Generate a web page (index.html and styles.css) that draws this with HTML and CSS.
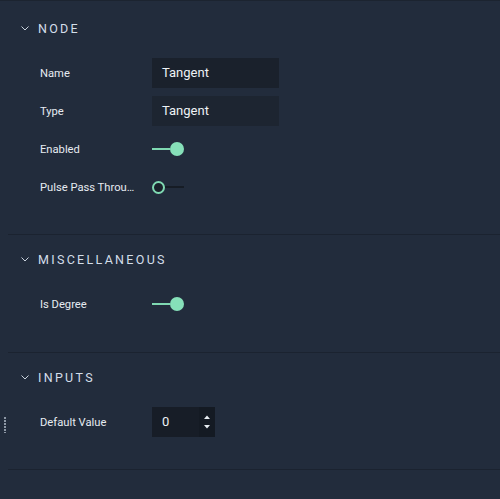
FILE: index.html
```html
<!DOCTYPE html>
<html>
<head>
<meta charset="utf-8">
<link rel="stylesheet" href="styles.css">
</head>
<body>
<div class="panel">
  <section class="section first">
    <div class="header">
      <svg class="chev" width="8" height="5" viewBox="0 0 8 5"><path d="M0.5 0.5 L4 4 L7.5 0.5" fill="none" stroke="#c9d2dd" stroke-width="1"/></svg>
      <span class="title">NODE</span>
    </div>
    <div class="rows">
      <div class="row"><span class="label">Name</span><div class="text-input">Tangent</div></div>
      <div class="row"><span class="label">Type</span><div class="text-input ro">Tangent</div></div>
      <div class="row"><span class="label">Enabled</span><div class="toggle on"><span class="track"></span><span class="knob"></span></div></div>
      <div class="row"><span class="label" title="Pulse Pass Through">Pulse Pass Throu…</span><div class="toggle off"><span class="knob"></span><span class="track"></span></div></div>
    </div>
  </section>
  <section class="section mid">
    <div class="header">
      <svg class="chev" width="8" height="5" viewBox="0 0 8 5"><path d="M0.5 0.5 L4 4 L7.5 0.5" fill="none" stroke="#c9d2dd" stroke-width="1"/></svg>
      <span class="title">MISCELLANEOUS</span>
    </div>
    <div class="rows">
      <div class="row"><span class="label">Is Degree</span><div class="toggle on"><span class="track"></span><span class="knob"></span></div></div>
    </div>
  </section>
  <section class="section">
    <div class="header">
      <svg class="chev" width="8" height="5" viewBox="0 0 8 5"><path d="M0.5 0.5 L4 4 L7.5 0.5" fill="none" stroke="#c9d2dd" stroke-width="1"/></svg>
      <span class="title">INPUTS</span>
    </div>
    <div class="rows">
      <div class="row port">
        <span class="handle"></span>
        <span class="label">Default Value</span>
        <div class="num-input">
          <span class="num-value">0</span>
          <span class="spin">
            <svg width="8" height="4" viewBox="0 0 8 4"><path d="M1 4 L4 0.5 L7 4 Z" fill="#e8edf2"/></svg>
            <svg width="8" height="4" viewBox="0 0 8 4"><path d="M1 0 L4 3.5 L7 0 Z" fill="#e8edf2"/></svg>
          </span>
        </div>
      </div>
    </div>
  </section>
</div>
</body>
</html>
```

FILE: styles.css
```css
html, body {
  margin: 0;
  padding: 0;
  background: #222c3c;
  width: 500px;
  height: 499px;
  overflow: hidden;
}
.panel {
  border-top: 1px solid #1c2430;
  font-family: Roboto, "Noto Sans", sans-serif;
  color: #e4e9ef;
}
.section {
  margin-left: 8px;
  padding: 12px 0 32px 0;
  border-bottom: 1px solid #1b2330;
}
.section.first {
  padding-top: 15px;
  padding-bottom: 32px;
}
.section.mid {
  padding-bottom: 33px;
}
.header {
  height: 24px;
  display: flex;
  align-items: center;
  padding-left: 13px;
}
.chev {
  display: block;
  margin-right: 9px;
}
.title {
  font-size: 12.5px;
  letter-spacing: 2.3px;
  color: #d3deea;
  font-weight: 400;
}
.rows {
  display: flex;
  flex-direction: column;
  gap: 8px;
  margin-top: 18px;
}
.row {
  position: relative;
  height: 30px;
  display: flex;
  align-items: center;
  padding-left: 32px;
}
.label {
  width: 112px;
  font-size: 11.2px;
  color: #e6ebf1;
  white-space: nowrap;
}
.text-input {
  width: 117px;
  height: 30px;
  padding-left: 10px;
  background: #1a212c;
  font-size: 13px;
  line-height: 30px;
  color: #eef2f6;
}
.text-input.ro {
  background: #1d2531;
}
.toggle {
  width: 32px;
  height: 14px;
  display: flex;
  align-items: center;
}
.toggle .track {
  height: 2px;
  flex: 1;
}
.toggle .knob {
  width: 14px;
  height: 14px;
  border-radius: 50%;
  box-sizing: border-box;
}
.toggle.on .track {
  background: #7fd9b2;
}
.toggle.on .knob {
  background: #86e0b9;
}
.toggle.off .track {
  background: #161c25;
}
.toggle.off .knob {
  width: 13px;
  height: 13px;
  border: 2px solid #7fd9b2;
  background: #1a212b;
}
.handle {
  position: absolute;
  left: -4px;
  top: 10px;
  width: 2px;
  height: 16px;
  background: repeating-linear-gradient(to bottom, #8e98a6 0 2px, transparent 2px 3px);
}
.num-input {
  width: 63px;
  height: 30px;
  display: flex;
  background: #171d27;
}
.num-value {
  flex: 1;
  padding-left: 10px;
  font-size: 13px;
  line-height: 30px;
  color: #eef2f6;
}
.spin {
  width: 16px;
  background: #141a23;
  display: flex;
  flex-direction: column;
  align-items: center;
  justify-content: center;
  gap: 6px;
}
.spin svg {
  display: block;
}
```
